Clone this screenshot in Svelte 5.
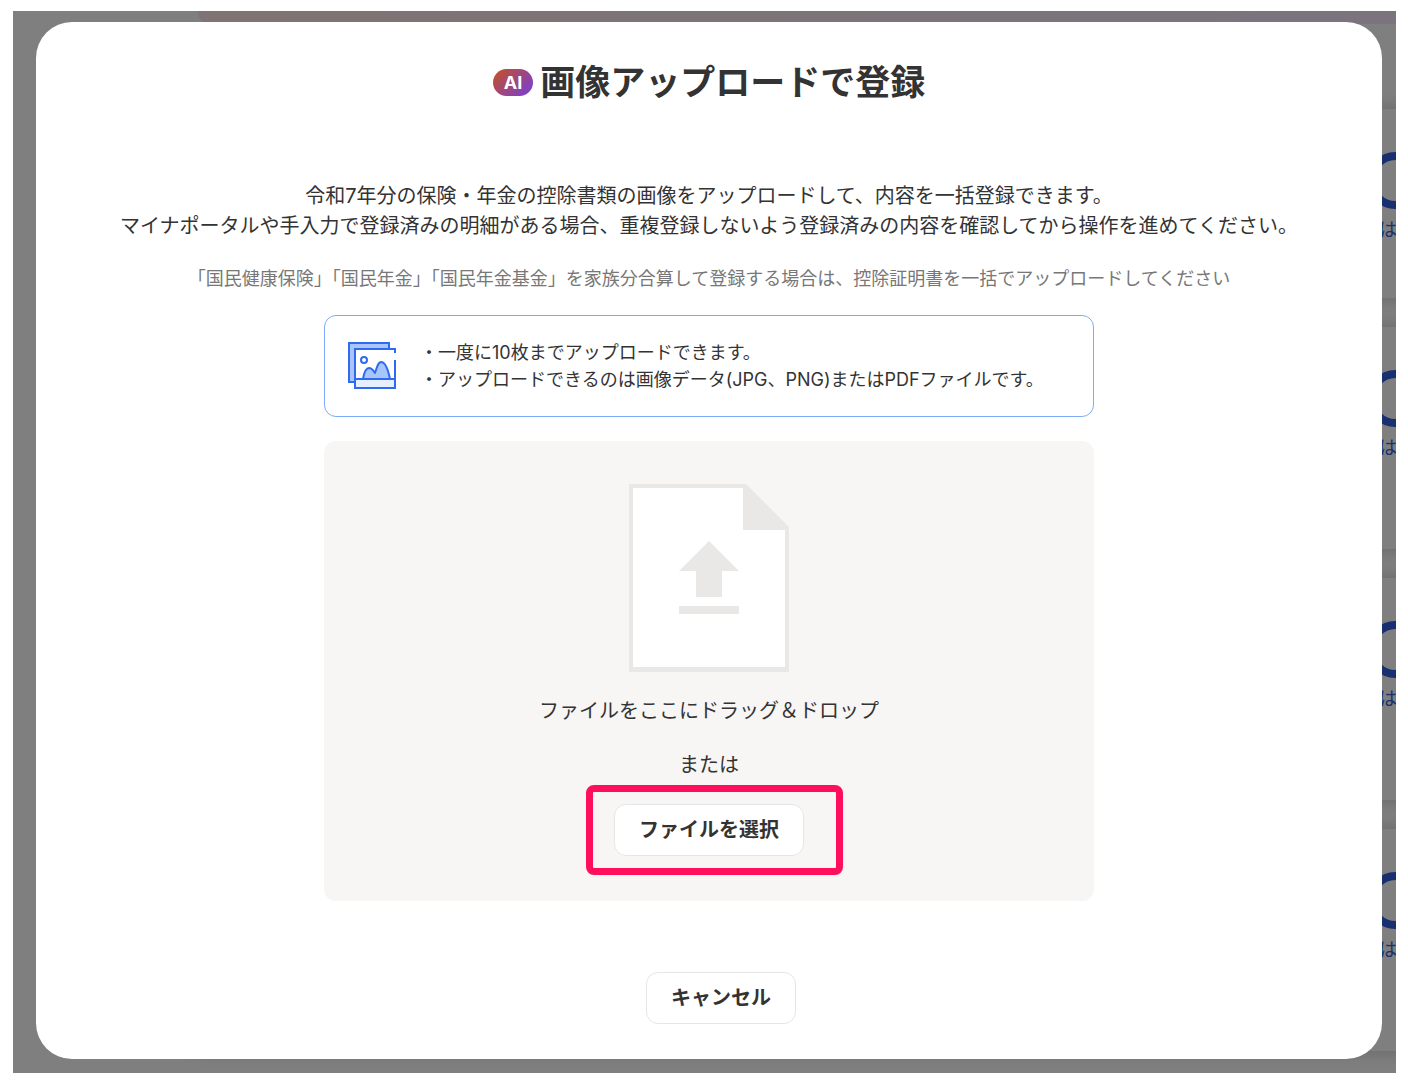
<script>
  const title = '画像アップロードで登録';
  const notes = [
    '・一度に10枚までアップロードできます。',
    '・アップロードできるのは画像データ(JPG、PNG)またはPDFファイルです。'
  ];
  const cards = ['short', 'tall', 'tall', 'tall'];
</script>

<div class="screen">
  <div class="page" aria-hidden="true">
    <div class="banner"></div>
    <div class="cards">
      {#each cards as size}
        <div class="card {size}">
          <span class="ring"></span>
          <span class="answer">は</span>
        </div>
      {/each}
    </div>
    <div class="shade"></div>
  </div>

  <div class="modal" role="dialog" aria-modal="true" aria-labelledby="dialog-title">
    <header>
      <span class="badge">AI</span>
      <h1 id="dialog-title">{title}</h1>
    </header>

    <p class="lead">
      令和7年分の保険・年金の控除書類の画像をアップロードして、内容を一括登録できます。<br />
      マイナポータルや手入力で登録済みの明細がある場合、重複登録しないよう登録済みの内容を確認してから操作を進めてください。
    </p>
    <p class="sub">「国民健康保険」「国民年金」「国民年金基金」を家族分合算して登録する場合は、控除証明書を一括でアップロードしてください</p>

    <section class="info">
      <svg width="48" height="48" viewBox="0 0 48 48" aria-hidden="true">
        <path d="M1 1h40v39H1z" fill="#a9c5fb" stroke="#2f6bf0" stroke-width="2" />
        <path d="M7 7h40v39H7z" fill="#fff" />
        <path d="M7 37h40v9H7z" fill="#e6effe" />
        <path d="M15 37C16 31 18 26 21 26c3 0 4 2 6 5c2-6 3-11 6-11c4 0 7 7 9 17z" fill="#a9c5fb" stroke="#2f6bf0" stroke-width="2" stroke-linejoin="round" />
        <circle cx="16" cy="18" r="3" fill="#fff" stroke="#2f6bf0" stroke-width="2" />
        <path d="M47 11V7H7v39h40V18M7 37h40" fill="none" stroke="#2f6bf0" stroke-width="2" />
      </svg>
      <ul>
        {#each notes as note}
          <li>{note}</li>
        {/each}
      </ul>
    </section>

    <section class="drop">
      <svg width="160" height="188" viewBox="0 0 160 188" aria-hidden="true">
        <path d="M0 0h117l43 43v145H0z" fill="#e9e8e6" />
        <path d="M4 4h110v42h42v137H4z" fill="#fff" />
        <path d="M80 57l30 30H93v26H67V87H50zM50 122h60v8H50z" fill="#e9e8e6" />
      </svg>
      <p class="hint">ファイルをここにドラッグ＆ドロップ</p>
      <p class="or">または</p>
      <div class="pick">
        <button type="button">ファイルを選択</button>
        <span class="highlight"></span>
      </div>
    </section>

    <footer>
      <button type="button">キャンセル</button>
    </footer>
  </div>
</div>

<style>
  :global(body) {
    margin: 0;
    background: #fff;
  }

  :global(#app) {
    padding: 11px 12px 11px 13px;
  }

  .screen {
    position: relative;
    overflow: hidden;
    padding: 11px 14px 14px 23px;
    background: #fff;
    color: #333;
    font-family: Inter, 'Noto Sans CJK JP', sans-serif;
    font-size: 20px;
    line-height: 30px;
  }

  .page {
    position: absolute;
    inset: 0;
    overflow: hidden;
    background: #fefefe;
  }

  .banner {
    height: 13px;
    margin-left: 185px;
    border-radius: 0 0 0 12px;
    background: linear-gradient(90deg, #ffe8e6, #f6e8ff);
  }

  .cards {
    display: flex;
    flex-direction: column;
    gap: 29px;
    margin: 85px -80px 0 185px;
  }

  .card {
    display: flex;
    flex-direction: column;
    align-items: flex-end;
    box-sizing: border-box;
    padding: 43px 52px 0 0;
    background: #fff;
    box-shadow: 0 0 16px rgba(0, 0, 0, 0.2);
  }

  .short {
    height: 189px;
  }

  .tall {
    height: 222px;
  }

  .ring {
    box-sizing: border-box;
    width: 57px;
    height: 57px;
    border: 8px solid #3060de;
    border-radius: 50%;
  }

  .answer {
    width: 45px;
    margin-top: 6px;
    color: #3060de;
    font-size: 18px;
    line-height: 30px;
  }

  .shade {
    position: absolute;
    inset: 0;
    background: rgba(0, 0, 0, 0.5);
  }

  .modal {
    position: relative;
    display: flex;
    flex-direction: column;
    align-items: center;
    padding: 35px 24px;
    border-radius: 36px;
    background: #fff;
  }

  header {
    display: flex;
    align-items: center;
    gap: 7px;
    margin-bottom: 74px;
  }

  h1 {
    margin: 0;
    font-size: 35px;
    line-height: 50px;
  }

  .badge {
    padding: 0 11px;
    border-radius: 14px;
    background: linear-gradient(135deg, #c8501e, #743ee0);
    color: #fff;
    font-size: 18px;
    font-weight: 700;
    line-height: 27px;
  }

  p {
    margin: 0;
    text-align: center;
  }

  .sub {
    margin: 23px 0 21px;
    color: #777;
    font-size: 18px;
  }

  .info,
  .drop {
    box-sizing: border-box;
    width: 100%;
    max-width: 770px;
    border-radius: 12px;
  }

  .info {
    display: flex;
    align-items: center;
    gap: 24px;
    padding: 23px;
    border: 1px solid #7fabf8;
  }

  ul {
    margin: 0;
    padding: 0;
    list-style: none;
    font-size: 18px;
    line-height: 27px;
  }

  .drop {
    display: flex;
    flex-direction: column;
    align-items: center;
    margin-top: 24px;
    padding: 43px 24px 45px;
    background: #f7f6f4;
  }

  .hint {
    margin-top: 24px;
  }

  .or {
    margin: 24px 0;
  }

  .pick {
    position: relative;
  }

  button {
    padding: 10px 24px;
    border: 1px solid #e6e6e6;
    border-radius: 12px;
    background: #fff;
    color: #333;
    font: inherit;
    font-weight: 700;
    cursor: pointer;
  }

  .highlight {
    position: absolute;
    inset: -19px -39px -19px -28px;
    border: 7px solid #ff0f5b;
    border-radius: 8px;
    pointer-events: none;
  }

  footer {
    margin-top: 71px;
    padding-left: 24px;
  }
</style>
